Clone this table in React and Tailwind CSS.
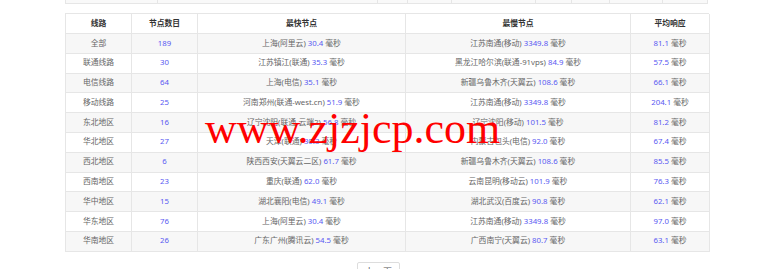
import React from "react";

const rows = [
  ["全部", "189", "上海(阿里云)", "30.4", "江苏南通(移动)", "3349.8", "81.1"],
  ["联通线路", "30", "江苏镇江(联通)", "35.3", "黑龙江哈尔滨(联通-91vps)", "84.9", "57.5"],
  ["电信线路", "64", "上海(电信)", "35.1", "新疆乌鲁木齐(天翼云)", "108.6", "66.1"],
  ["移动线路", "25", "河南郑州(联通-west.cn)", "51.9", "江苏南通(移动)", "3349.8", "204.1"],
  ["东北地区", "16", "辽宁沈阳(联通-云端2)", "56.8", "辽宁沈阳(移动)", "101.5", "81.2"],
  ["华北地区", "27", "天津(联通)", "30.3", "内蒙古包头(电信)", "92.0", "67.4"],
  ["西北地区", "6", "陕西西安(天翼云二区)", "61.7", "新疆乌鲁木齐(天翼云)", "108.6", "85.5"],
  ["西南地区", "23", "重庆(联通)", "62.0", "云南昆明(移动云)", "101.9", "76.3"],
  ["华中地区", "15", "湖北襄阳(电信)", "49.1", "湖北武汉(百度云)", "90.8", "62.1"],
  ["华东地区", "76", "上海(阿里云)", "30.4", "江苏南通(移动)", "3349.8", "97.0"],
  ["华南地区", "26", "广东广州(腾讯云)", "54.5", "广西南宁(天翼云)", "80.7", "63.1"],
];

const topCols = [92, 220, 31, 44, 84, 36, 38, 53, 45];

function Ms({ place, value }) {
  return (
    <span>
      {place ? place + " " : ""}
      <span className="text-[#5a5af2]">{value}</span> 毫秒
    </span>
  );
}

export default function App() {
  return (
    <div
      className="relative w-[780px] h-[269px] overflow-hidden bg-white text-[#666] text-[7.8px] leading-none"
      style={{ fontFamily: '"Noto Sans", "Noto Sans CJK SC", sans-serif' }}
    >
      {/* bottom of previous table */}
      <div className="ml-[65px] w-[643px] flex border-l border-b border-[#e6e6e6]">
        {topCols.map((w, i) => (
          <div
            key={i}
            className="h-[3px] bg-[#f9f9f9] border-r border-[#e6e6e6]"
            style={{ width: w }}
          />
        ))}
      </div>

      {/* main table */}
      <div className="mt-[9px] ml-[65px] w-[644px] grid grid-cols-[66px_66px_208px_225px_79px] border-t border-l border-[#e6e6e6]">
        {["线路", "节点数目", "最快节点", "最慢节点", "平均响应"].map((h) => (
          <div
            key={h}
            className="h-[20px] flex items-center justify-center border-r border-b border-[#e6e6e6] bg-white font-semibold text-[#333]"
          >
            {h}
          </div>
        ))}
        {rows.map((r, i) => {
          const bg = i % 2 === 0 ? "bg-[#f7f7f7]" : "bg-white";
          const cell = `h-[19.8px] flex items-center justify-center border-r border-b border-[#e6e6e6] whitespace-nowrap ${bg}`;
          return (
            <React.Fragment key={i}>
              <div className={cell}>{r[0]}</div>
              <div className={cell}>
                <span className="text-[#5a5af2]">{r[1]}</span>
              </div>
              <div className={cell}>
                <Ms place={r[2]} value={r[3]} />
              </div>
              <div className={cell}>
                <Ms place={r[4]} value={r[5]} />
              </div>
              <div className={cell}>
                <Ms value={r[6]} />
              </div>
            </React.Fragment>
          );
        })}
      </div>

      {/* pagination button, cut off at the bottom */}
      <div className="mt-[10px] ml-[357px] w-[43px] h-[22px] border border-[#ddd] rounded-[2px] bg-white flex justify-center pt-[4px] text-[9px] text-[#555]">
        上一页
      </div>

      {/* watermark */}
      <div
        className="absolute left-[205px] top-[107px] text-[44px] leading-[44px] text-[#ff0000] whitespace-nowrap"
        style={{ fontFamily: '"Liberation Serif", serif' }}
      >
        www.zjzjcp.com
      </div>
    </div>
  );
}
